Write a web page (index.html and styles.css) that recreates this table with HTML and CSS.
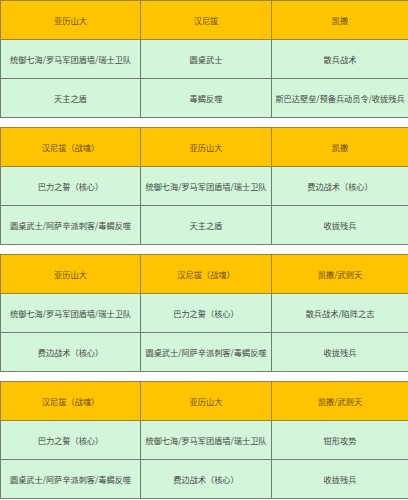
FILE: index.html
```html
<!DOCTYPE html>
<html lang="zh">
<head>
<meta charset="utf-8">
<link rel="stylesheet" href="styles.css">
</head>
<body>
<div class="page">
  <table class="grid">
    <colgroup><col class="c1"><col class="c2"><col class="c3"></colgroup>
    <tr class="head"><td>亚历山大</td><td>汉尼拔</td><td>凯撒</td></tr>
    <tr><td>统御七海/罗马军团盾墙/瑞士卫队</td><td>圆桌武士</td><td>散兵战术</td></tr>
    <tr><td>天主之盾</td><td>毒蝎反噬</td><td>斯巴达壁垒/预备兵动员令/收拢残兵</td></tr>
  </table>
  <table class="grid">
    <colgroup><col class="c1"><col class="c2"><col class="c3"></colgroup>
    <tr class="head"><td>汉尼拔（战魂）</td><td>亚历山大</td><td>凯撒</td></tr>
    <tr><td>巴力之誓（核心）</td><td>统御七海/罗马军团盾墙/瑞士卫队</td><td>费边战术（核心）</td></tr>
    <tr><td>圆桌武士/阿萨辛派刺客/毒蝎反噬</td><td>天主之盾</td><td>收拢残兵</td></tr>
  </table>
  <table class="grid">
    <colgroup><col class="c1"><col class="c2"><col class="c3"></colgroup>
    <tr class="head"><td>亚历山大</td><td>汉尼拔（战魂）</td><td>凯撒/武则天</td></tr>
    <tr><td>统御七海/罗马军团盾墙/瑞士卫队</td><td>巴力之誓（核心）</td><td>散兵战术/陷阵之志</td></tr>
    <tr><td>费边战术（核心）</td><td>圆桌武士/阿萨辛派刺客/毒蝎反噬</td><td>收拢残兵</td></tr>
  </table>
  <table class="grid">
    <colgroup><col class="c1"><col class="c2"><col class="c3"></colgroup>
    <tr class="head"><td>汉尼拔（战魂）</td><td>亚历山大</td><td>凯撒/武则天</td></tr>
    <tr><td>巴力之誓（核心）</td><td>统御七海/罗马军团盾墙/瑞士卫队</td><td>钳形攻势</td></tr>
    <tr><td>圆桌武士/阿萨辛派刺客/毒蝎反噬</td><td>费边战术（核心）</td><td>收拢残兵</td></tr>
  </table>
</div>
</body>
</html>
```
FILE: styles.css
```css
html, body {
  margin: 0;
  padding: 0;
  background: #ffffff;
}
.page {
  width: 408px;
  display: flex;
  flex-direction: column;
  gap: 9px;
}
.grid {
  width: 408px;
  table-layout: fixed;
  border-collapse: collapse;
  font-family: "Noto Sans CJK SC", "Noto Sans", sans-serif;
  font-size: 8.2px;
  color: #3f4a40;
}
.c1 { width: 140px; }
.c2 { width: 131px; }
.c3 { width: 137px; }
.grid td {
  height: 38px;
  padding: 0;
  text-align: center;
  vertical-align: middle;
  white-space: nowrap;
  background: #d3f5d9;
  border: 1px solid #6f7e70;
}
.grid .head td {
  background: #fec400;
  color: #6e4f12;
  border-color: #9a8440;
}
```
